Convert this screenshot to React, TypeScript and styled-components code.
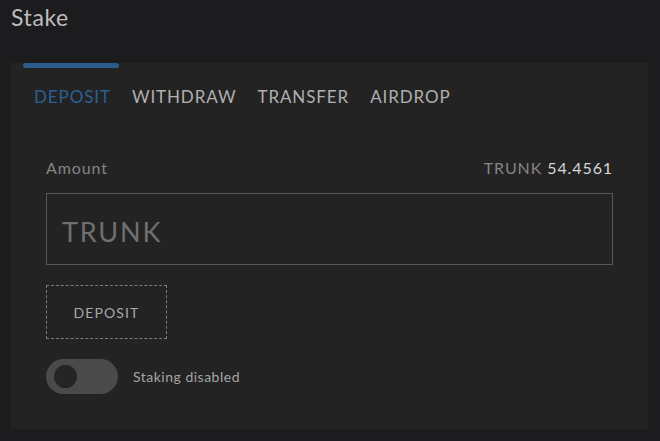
import React from "react";
import styled, { createGlobalStyle } from "styled-components";

const Global = createGlobalStyle`
  html, body { margin: 0; padding: 0; background: #1c1b1e; }
  body { font-family: "Lato", "Noto Sans", sans-serif; }
`;

const Page = styled.div`
  width: 660px;
  height: 441px;
  box-sizing: border-box;
  padding: 0 12px 0 11px;
  background: #1c1b1e;
  display: flex;
  flex-direction: column;
`;

const Title = styled.h1`
  margin: 0;
  height: 63px;
  padding-top: 3px;
  box-sizing: border-box;
  font-size: 23px;
  font-weight: 400;
  letter-spacing: 0.6px;
  color: #bdbdbd;
  line-height: 28px;
`;

const Card = styled.div`
  height: 366px;
  background: #232323;
  display: flex;
  flex-direction: column;
  padding: 0 35px 0 35px;
`;

const Indicator = styled.div`
  width: 96px;
  height: 5px;
  border-radius: 3px;
  background: #2a5d8c;
  margin-left: -23px;
`;

const Tabs = styled.div`
  display: flex;
  gap: 21px;
  margin-top: 19px;
  margin-left: -12px;
`;

const Tab = styled.div<{ $active?: boolean }>`
  font-size: 17px;
  line-height: 20px;
  letter-spacing: 0.9px;
  text-transform: uppercase;
  color: ${(p) => (p.$active ? "#2b6193" : "#b0b0b0")};
`;

const Body = styled.div`
  margin-top: 51px;
  display: flex;
  flex-direction: column;
`;

const LabelRow = styled.div`
  display: flex;
  justify-content: space-between;
  align-items: center;
  font-size: 16px;
  line-height: 20px;
  letter-spacing: 0.9px;
  color: #858585;
`;

const Balance = styled.span`
  color: #858585;
  strong {
    font-weight: 400;
    color: #d6d6d6;
  }
`;

const Input = styled.input`
  margin-top: 15px;
  height: 72px;
  box-sizing: border-box;
  border: 1px solid #575757;
  background: transparent;
  padding: 4px 15px 0;
  font-family: "Lato", "Noto Sans", sans-serif;
  font-size: 27px;
  letter-spacing: 1.8px;
  color: #ccc;
  outline: none;
  &::placeholder {
    color: #707070;
  }
`;

const Button = styled.button`
  margin-top: 20px;
  width: 121px;
  height: 54px;
  box-sizing: border-box;
  border: 1px dashed #7a7a7a;
  background: transparent;
  color: #a8a8a8;
  font-family: "Lato", "Noto Sans", sans-serif;
  font-size: 14px;
  letter-spacing: 1.1px;
  cursor: pointer;
`;

const ToggleRow = styled.div`
  margin-top: 20px;
  display: flex;
  align-items: center;
  gap: 15px;
`;

const Track = styled.div`
  width: 72px;
  height: 35px;
  border-radius: 18px;
  background: #4a4a4a;
  display: flex;
  align-items: center;
  padding-left: 8px;
  box-sizing: border-box;
`;

const Knob = styled.div`
  width: 23px;
  height: 23px;
  border-radius: 50%;
  background: #252525;
`;

const ToggleLabel = styled.span`
  font-size: 14px;
  letter-spacing: 0.5px;
  color: #a5a5a5;
`;

export default function App() {
  return (
    <>
      <Global />
      <Page>
        <Title>Stake</Title>
        <Card>
          <Indicator />
          <Tabs>
            <Tab $active>Deposit</Tab>
            <Tab>Withdraw</Tab>
            <Tab>Transfer</Tab>
            <Tab>Airdrop</Tab>
          </Tabs>
          <Body>
            <LabelRow>
              <span>Amount</span>
              <Balance>
                TRUNK <strong>54.4561</strong>
              </Balance>
            </LabelRow>
            <Input placeholder="TRUNK" />
            <div>
              <Button>DEPOSIT</Button>
            </div>
            <ToggleRow>
              <Track>
                <Knob />
              </Track>
              <ToggleLabel>Staking disabled</ToggleLabel>
            </ToggleRow>
          </Body>
        </Card>
      </Page>
    </>
  );
}
